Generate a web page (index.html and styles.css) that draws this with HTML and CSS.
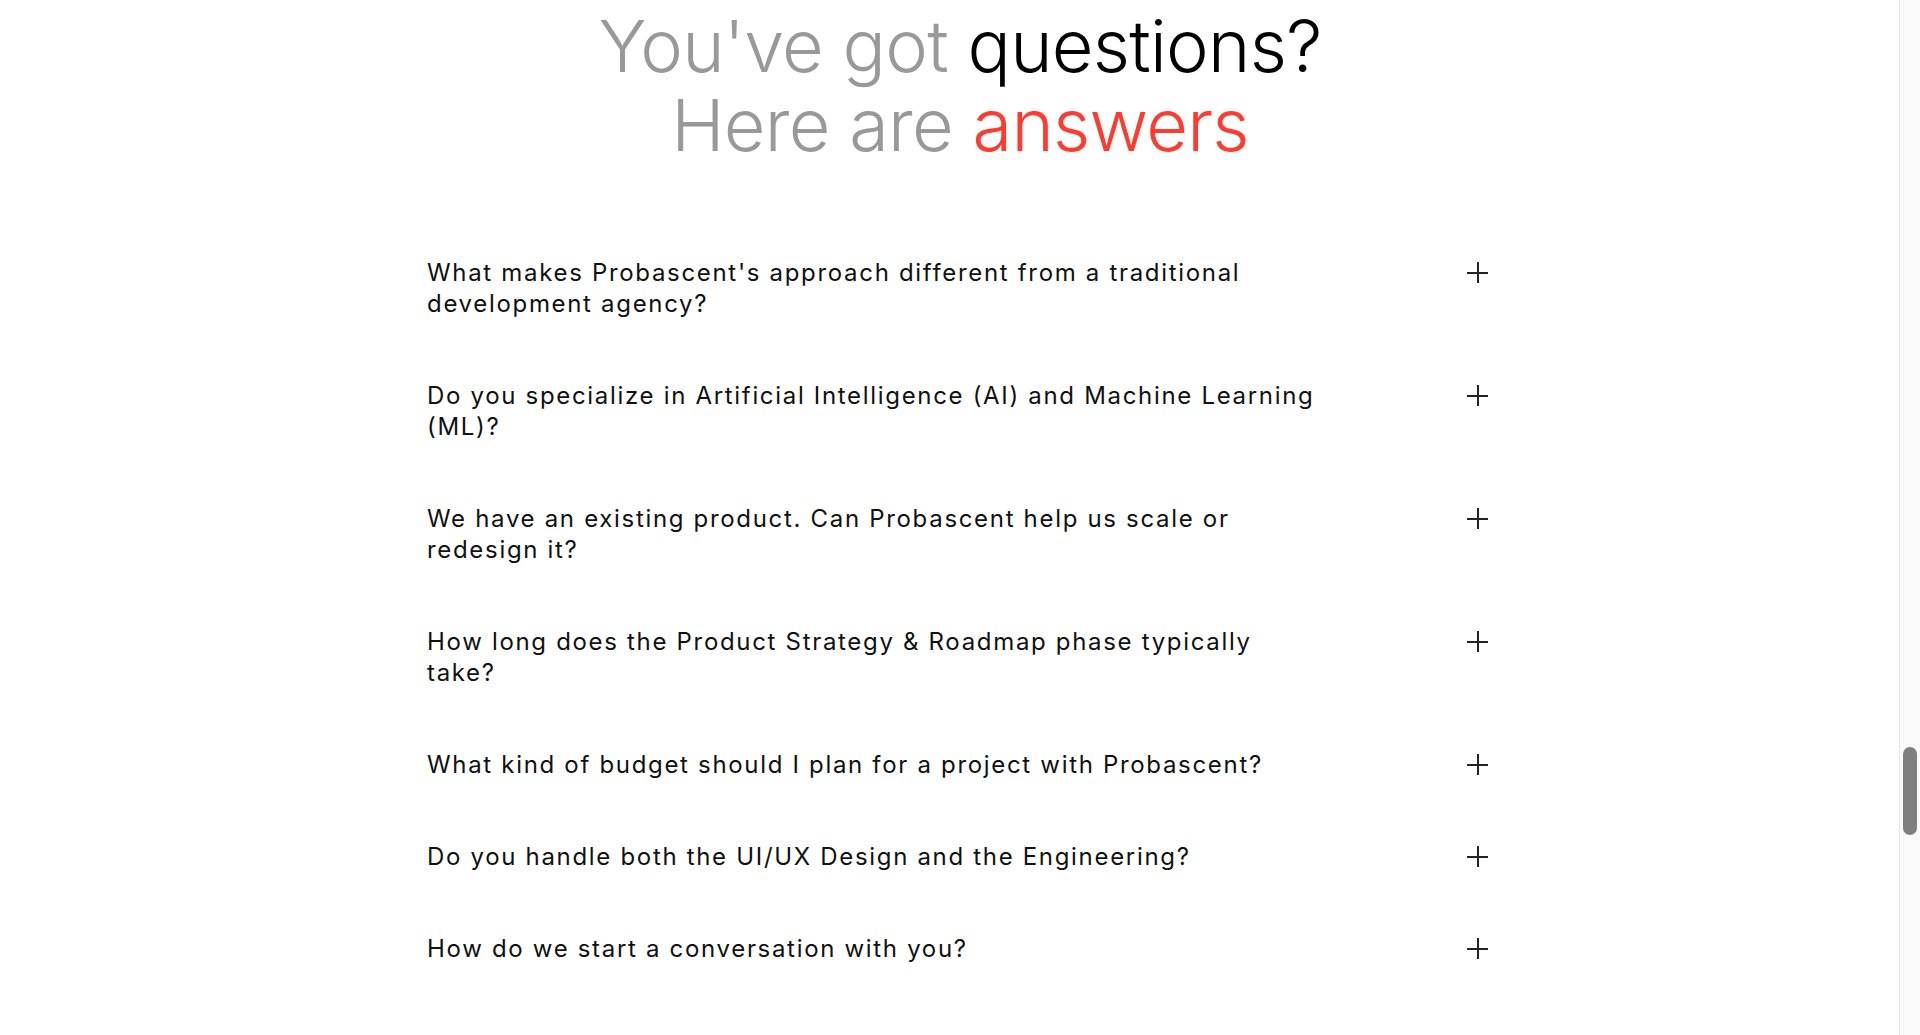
FILE: index.html
```html
<!doctype html>
<html lang="en">
  <head>
    <meta charset="UTF-8" />
    <meta name="viewport" content="width=device-width, initial-scale=1.0" />
    <title>FAQ</title>
    <link rel="stylesheet" href="styles.css">
  </head>
  <body>
    <section class="faq">
      <h2 class="faq-title">
        <span class="muted">You've got</span> questions?<br />
        <span class="muted">Here are</span> <span class="accent">answers</span>
      </h2>

      <div class="faq-list">
        <div class="faq-item">
          <p class="faq-question">What makes Probascent's approach different from a traditional development agency?</p>
          <span class="faq-toggle"></span>
        </div>
        <div class="faq-item">
          <p class="faq-question">Do you specialize in Artificial Intelligence (AI) and Machine Learning (ML)?</p>
          <span class="faq-toggle"></span>
        </div>
        <div class="faq-item">
          <p class="faq-question">We have an existing product. Can Probascent help us scale or redesign it?</p>
          <span class="faq-toggle"></span>
        </div>
        <div class="faq-item">
          <p class="faq-question">How long does the Product Strategy &amp; Roadmap phase typically take?</p>
          <span class="faq-toggle"></span>
        </div>
        <div class="faq-item">
          <p class="faq-question">What kind of budget should I plan for a project with Probascent?</p>
          <span class="faq-toggle"></span>
        </div>
        <div class="faq-item">
          <p class="faq-question">Do you handle both the UI/UX Design and the Engineering?</p>
          <span class="faq-toggle"></span>
        </div>
        <div class="faq-item">
          <p class="faq-question">How do we start a conversation with you?</p>
          <span class="faq-toggle"></span>
        </div>
      </div>
    </section>

    <div class="scroll-track"><div class="scroll-thumb"></div></div>
  </body>
</html>
```

FILE: styles.css
```css
html,
body {
  height: 100%;
  overflow: hidden;
}

body {
  margin: 0;
  background: #fff;
  color: #111;
  font-family: Inter, "Noto Sans", sans-serif;
}

.faq {
  padding-top: 6px;
}

.faq-title {
  margin: 0;
  text-align: center;
  font-size: 72px;
  font-weight: 300;
  line-height: 79px;
  letter-spacing: -0.01em;
  color: #000;
}

.faq-title .muted {
  color: #999;
}

.faq-title .accent {
  color: #ff3b30;
}

.faq-list {
  width: 1066px;
  margin: 63px auto 0;
}

.faq-item {
  display: flex;
  justify-content: space-between;
  align-items: flex-start;
  padding: 30px 0 31px;
  cursor: pointer;
}

.faq-question {
  margin: 0;
  max-width: 892px;
  font-size: 24px;
  line-height: 31px;
  letter-spacing: 0.07em;
}

/* plus sign drawn from two bars */
.faq-toggle {
  position: relative;
  flex: none;
  width: 21px;
  height: 21px;
  margin: 5px 5px 0 0;
}

.faq-toggle::before,
.faq-toggle::after {
  content: "";
  position: absolute;
  background: #222;
}

.faq-toggle::before {
  left: 0;
  right: 0;
  top: 10px;
  height: 2px;
}

.faq-toggle::after {
  top: 0;
  bottom: 0;
  left: 10px;
  width: 2px;
}

.scroll-track {
  position: fixed;
  top: 0;
  right: 0;
  bottom: 0;
  width: 20px;
  background: #fafafa;
  border-left: 1px solid #e6e6e6;
}

.scroll-thumb {
  position: absolute;
  top: 747px;
  left: 3px;
  width: 14px;
  height: 88px;
  border-radius: 7px;
  background: #7f7f7f;
}
```
